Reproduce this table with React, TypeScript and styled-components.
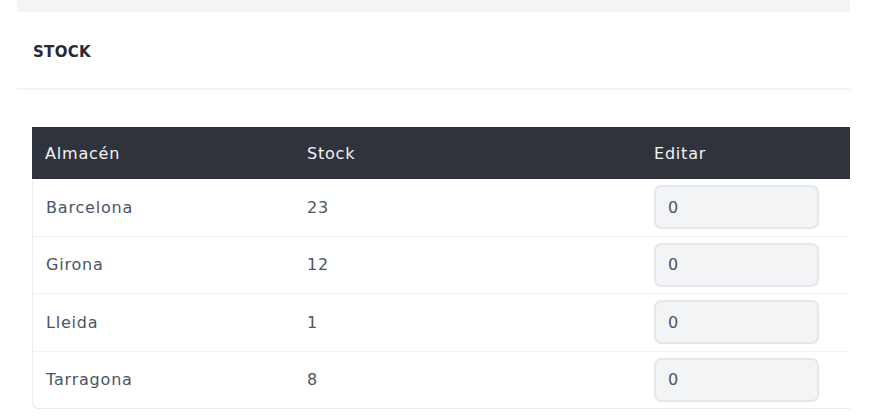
import React from "react";
import styled, { createGlobalStyle } from "styled-components";

const Global = createGlobalStyle`
  html, body { margin: 0; padding: 0; background: #ffffff; }
  body { font-family: "DejaVu Sans", "Liberation Sans", sans-serif; color: #374151; }
`;

const Page = styled.div`
  width: 880px;
  padding: 0 30px 0 17px;
  box-sizing: border-box;
`;

const TopStrip = styled.div`
  height: 12px;
  background: #f3f4f6;
`;

const Card = styled.section`
  background: #ffffff;
`;

const CardHeader = styled.header`
  height: 78px;
  display: flex;
  align-items: center;
  padding: 3px 16px 0;
  border-bottom: 2px solid #f3f4f6;
  box-sizing: border-box;
`;

const Title = styled.h2`
  margin: 0;
  font-size: 15px;
  font-weight: 700;
  color: #252b36;
  letter-spacing: 0.3px;
`;

const CardBody = styled.div`
  padding: 37px 0 0 15px;
`;

const Table = styled.table`
  width: 100%;
  border-collapse: separate;
  border-spacing: 0;
  font-size: 16px;
  letter-spacing: 0.8px;
`;

const HeadCell = styled.th`
  background: #2f333b;
  color: #f3f4f6;
  font-weight: 400;
  text-align: left;
  height: 52px;
  padding: 0 13px;
  box-sizing: border-box;
`;

const Cell = styled.td<{ $first?: boolean }>`
  height: 57.5px;
  padding: 0 13px;
  box-sizing: border-box;
  color: #4b5563;
  border-bottom: 1px solid #f0f1f3;
  border-left: ${(p) => (p.$first ? "1px solid #eceef1" : "none")};
  tr:last-child & { border-bottom-color: #e8eaed; }
  tr:last-child &:first-child { border-bottom-left-radius: 6px; }
`;

const NumInput = styled.input`
  width: 165px;
  height: 44px;
  box-sizing: border-box;
  border: 2px solid #e5e7eb;
  border-radius: 7px;
  background: #f3f4f6;
  padding: 0 12px;
  font: inherit;
  font-size: 16px;
  letter-spacing: 0.8px;
  color: #4b5563;
  outline: none;
`;

const rows = [
  { name: "Barcelona", stock: 23 },
  { name: "Girona", stock: 12 },
  { name: "Lleida", stock: 1 },
  { name: "Tarragona", stock: 8 },
];

export default function App() {
  return (
    <>
      <Global />
      <Page>
        <TopStrip />
        <Card>
          <CardHeader>
            <Title>STOCK</Title>
          </CardHeader>
          <CardBody>
            <Table>
              <colgroup>
                <col style={{ width: 262 }} />
                <col style={{ width: 347 }} />
                <col />
              </colgroup>
              <thead>
                <tr>
                  <HeadCell>Almacén</HeadCell>
                  <HeadCell>Stock</HeadCell>
                  <HeadCell>Editar</HeadCell>
                </tr>
              </thead>
              <tbody>
                {rows.map((r) => (
                  <tr key={r.name}>
                    <Cell $first>{r.name}</Cell>
                    <Cell>{r.stock}</Cell>
                    <Cell>
                      <NumInput defaultValue="0" />
                    </Cell>
                  </tr>
                ))}
              </tbody>
            </Table>
          </CardBody>
        </Card>
      </Page>
    </>
  );
}
